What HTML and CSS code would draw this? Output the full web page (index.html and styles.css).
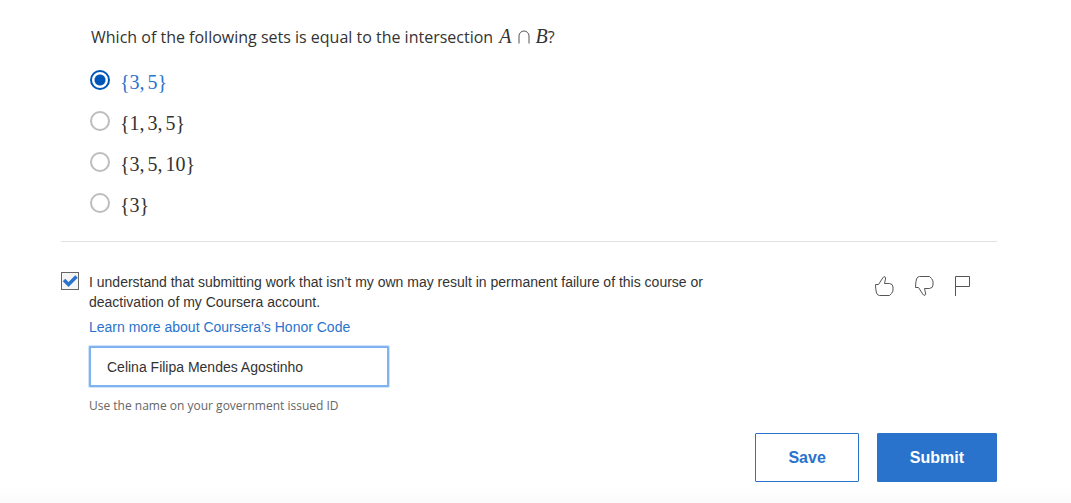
FILE: index.html
```html
<!DOCTYPE html>
<html lang="en">
<head>
<meta charset="utf-8">
<meta name="viewport" content="width=device-width, initial-scale=1">
<title>Quiz</title>
<link rel="stylesheet" href="styles.css">
</head>
<body>
<form class="quiz">
  <fieldset class="question">
    <legend class="prompt">Which of the following sets is equal to the intersection <span class="math"><i>A</i><svg class="cap" viewBox="0 0 12 14" aria-label="∩"><path d="M1 13.500V6a5 5 0 0 1 10 0v7.500"/></svg><i>B</i></span>?</legend>
    <label class="option"><input class="radio" type="radio" name="answer" checked><span class="set"><span>{3,</span><span>5}</span></span></label>
    <label class="option"><input class="radio" type="radio" name="answer"><span class="set"><span>{1,</span><span>3,</span><span>5}</span></span></label>
    <label class="option"><input class="radio" type="radio" name="answer"><span class="set"><span>{3,</span><span>5,</span><span>10}</span></span></label>
    <label class="option"><input class="radio" type="radio" name="answer"><span class="set"><span>{3}</span></span></label>
  </fieldset>
  <section class="honor">
    <input class="check" type="checkbox" id="agree" checked>
    <div class="agreement">
      <label class="statement" for="agree">I understand that submitting work that isn’t my own may result in permanent failure of this course or deactivation of my Coursera account.</label>
      <a class="learn" href="#">Learn more about Coursera’s Honor Code</a>
      <input class="name" id="name" type="text" value="Celina Filipa Mendes Agostinho">
      <label class="hint" for="name">Use the name on your government issued ID</label>
    </div>
    <div class="feedback">
      <button class="icon" type="button" aria-label="Like"><svg viewBox="0 0 20 20"><path d="M1.500 8.500H4.500L8.700 2Q9.500.500 11 .700 12 1.100 11.500 3L10.500 7.500H15.500Q19 8 19 11V14Q19 16 17.500 17.500L15.500 19.500H5.500Q3.500 19.500 2.500 17Q1.500 13 1.500 8.500Z"/></svg></button>
      <button class="icon" type="button" aria-label="Dislike"><svg viewBox="0 0 20 20"><path d="M1.500 11.500H4.500L8.700 18Q9.500 19.500 11 19.300 12 18.900 11.500 17L10.500 12.500H15.500Q19 12 19 9V6Q19 4 17.500 2.500L15.500.500H5.500Q3.500.500 2.500 3Q1.500 7 1.500 11.500Z"/></svg></button>
      <button class="icon" type="button" aria-label="Flag"><svg viewBox="0 0 20 20"><path d="M1.500 20V.500H15.500V10.500H1.500"/></svg></button>
    </div>
  </section>
  <div class="actions">
    <button class="button save" type="button">Save</button>
    <button class="button submit" type="submit">Submit</button>
  </div>
</form>
</body>
</html>
```
FILE: styles.css
```css
* { box-sizing: border-box; }
body {
  margin: 0;
  min-height: 100vh;
  color: #333;
  background: linear-gradient(to top, #fafafa, #fff 16px);
  font-family: "Liberation Sans", Arial, sans-serif;
}
.quiz { padding: 24px 74px 20px 61px; }
.question {
  margin: 0;
  padding: 0 0 17px 29px;
  border: 0;
  border-bottom: 1px solid #e1e1e1;
}
.prompt {
  padding: 0 0 10px 1px;
  font: 16px/26px "Open Sans", sans-serif;
}
.math {
  margin-left: 2px;
  font: 20px/20px "Liberation Serif", serif;
}
.cap {
  width: 12px;
  height: 14px;
  margin: 0 6px;
  vertical-align: -1px;
  fill: none;
  stroke: #555;
}
.option {
  display: flex;
  align-items: flex-start;
  gap: 10px;
  height: 41px;
  padding-top: 10px;
}
.radio {
  appearance: none;
  width: 20px;
  height: 20px;
  margin: 0;
  border: 2px solid #bdbdbd;
  border-radius: 50%;
  background: #fff;
}
.radio:checked {
  border-color: #0056b8;
  background: radial-gradient(circle, #0056b8 5px, #fff 6px);
}
.set {
  display: flex;
  gap: 3px;
  font: 20px/24px "Liberation Serif", serif;
}
.radio:checked + .set { color: #2a73cc; }
.honor { display: flex; padding-top: 30px; }
.check {
  appearance: none;
  flex: none;
  width: 18px;
  height: 18px;
  margin: 0 10px 0 0;
  border: 1px solid #666;
  background: #f5f5f5;
}
.check:checked {
  background: #f5f5f5 url("data:image/svg+xml,%3Csvg xmlns='http://www.w3.org/2000/svg' viewBox='0 0 16 16'%3E%3Cpath d='M2 7l4.500 4.500 8-8' fill='none' stroke='%232a73cc' stroke-width='3.500'/%3E%3C/svg%3E");
}
.agreement {
  display: flex;
  flex: 1;
  flex-direction: column;
  align-items: flex-start;
  max-width: 640px;
  font-size: 14px;
  line-height: 20px;
}
.learn { margin-top: 5px; color: #2a73cc; text-decoration: none; }
.name {
  width: 300px;
  max-width: 100%;
  height: 41px;
  margin-top: 9px;
  padding: 0 16px;
  border: 2px solid #7fb3ef;
  border-radius: 1px;
  color: #333;
  background: #fff;
  box-shadow: 0 0 0 1px #cfe3fa;
  font: 14px/20px "Liberation Sans", Arial, sans-serif;
  outline: 0;
}
.hint {
  margin-top: 9px;
  color: #666;
  font: 12px/20px "Open Sans", sans-serif;
}
.feedback {
  display: flex;
  gap: 20px;
  margin-left: auto;
  padding: 4px 23px 0 0;
}
.icon {
  width: 20px;
  height: 20px;
  padding: 0;
  border: 0;
  background: none;
}
.icon svg { display: block; fill: none; stroke: #555; }
.actions {
  display: flex;
  justify-content: flex-end;
  gap: 18px;
  margin-top: 17px;
}
.button {
  height: 49px;
  padding: 0 32px;
  border: 1px solid #2a73cc;
  border-radius: 1px;
  font: bold 16px/24px "Liberation Sans", Arial, sans-serif;
}
.save { color: #2a73cc; background: #fff; }
.submit { color: #fff; background: #2a73cc; }
```
